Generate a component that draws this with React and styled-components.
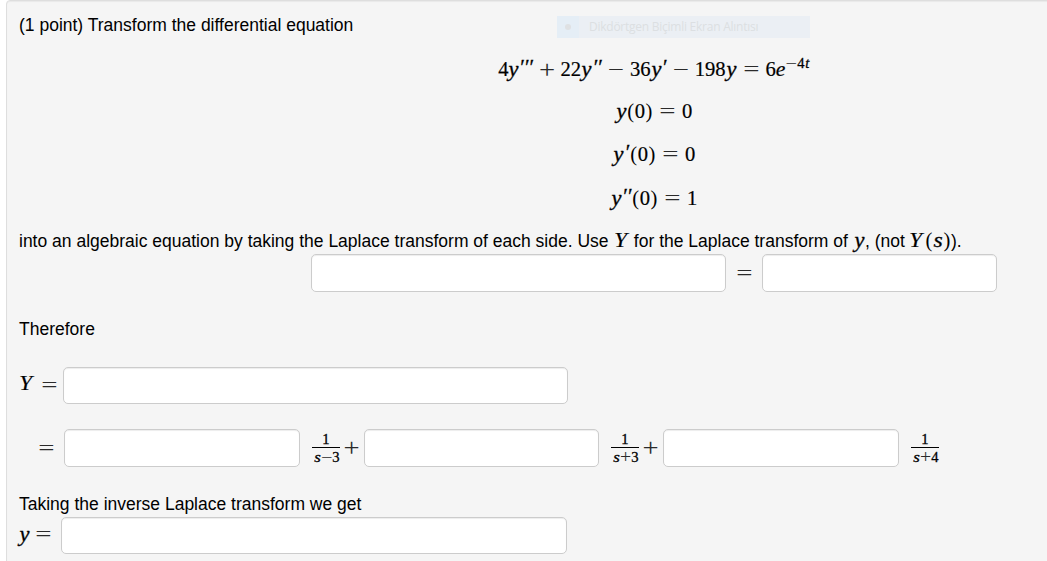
import React from "react";
import styled, { createGlobalStyle } from "styled-components";

const GlobalStyle = createGlobalStyle`
  body {
    margin: 0;
    background: #ffffff;
    overflow: hidden;
  }
`;

const Page = styled.div`
  height: 561px;
  overflow: hidden;
  padding-left: 6px;
  box-sizing: border-box;
  font-family: "Liberation Sans", Arial, sans-serif;
  font-size: 17.5px;
  color: #000000;
`;

const Well = styled.div`
  box-sizing: border-box;
  width: 1296px;
  height: 620px;
  padding: 11px 12px;
  border: 1px solid #dedede;
  border-radius: 4px;
  background: #f5f5f5;
  box-shadow: inset 0 1px 1px rgba(0, 0, 0, 0.05);
`;

const Line = styled.div`
  display: flex;
  align-items: baseline;
  height: 26px;
  line-height: 26px;
  white-space: pre;
  margin-top: ${props => props.top || 0}px;
`;

const Sentence = styled.span`
  display: inline-block;
  width: ${props => props.w}px;
`;

const Display = styled.div`
  display: flex;
  flex-direction: column;
  align-items: center;
  padding-top: 10px;
`;

const Equation = styled.div`
  display: flex;
  align-items: baseline;
  height: ${props => props.h || 43}px;
  line-height: ${props => props.leading || 43}px;
`;

const Glyph = styled.span`
  display: inline-flex;
  justify-content: center;
  width: ${props => props.w}px;
  margin-right: ${props => props.gap || 0}px;
  font-family: "Liberation Serif", "Times New Roman", serif;
  font-size: ${props => props.size || 20.6}px;
  font-style: ${props => (props.italic ? "italic" : "normal")};
  white-space: nowrap;
  color: ${props => props.tint || "#000000"};
  -webkit-text-stroke: ${props => props.weight || 0}px #000000;
  transform: translateY(${props => props.rise || 0}px)
    scaleX(${props => props.stretch || 1});
`;

const AnswerRow = styled.div`
  display: flex;
  align-items: center;
  height: ${props => props.h || 38}px;
  margin-top: ${props => props.top || 0}px;
  padding-left: ${props => props.indent || 0}px;
`;

const Answer = styled.input`
  box-sizing: border-box;
  width: ${props => props.w}px;
  height: 100%;
  margin: 0 ${props => props.after || 0}px 0 ${props => props.before || 0}px;
  padding: 4px 6px;
  border: 1px solid #cccccc;
  border-radius: 5px;
  background: #ffffff;
  box-shadow: inset 0 1px 1px rgba(0, 0, 0, 0.075);
  outline: none;
`;

const Fraction = styled.span`
  display: flex;
  flex-direction: column;
  align-items: center;
  width: 28px;
  margin-right: ${props => props.after || 0}px;
  line-height: 17px;
`;

const Bar = styled.span`
  width: 28px;
  height: 1px;
  background: #000000;
`;

const Denominator = styled.span`
  display: flex;
  align-items: baseline;
  height: 17px;
  padding: 1px 0 0 2px;
`;

const Snip = styled.div`
  position: absolute;
  left: 557px;
  top: 16px;
  display: flex;
  align-items: center;
  width: 253px;
  height: 22px;
  background: #ebeff4;
  color: #dcdfe2;
  font-family: "Open Sans", "Noto Sans", sans-serif;
  font-size: 12px;
  letter-spacing: -0.25px;
  line-height: 20px;
  white-space: nowrap;
`;

const SnipIcon = styled.span`
  display: flex;
  align-items: center;
  justify-content: center;
  width: 22px;
  height: 22px;
  margin-right: 10px;
  background: #e5eef6;
`;

const Dot = styled.span`
  width: 6px;
  height: 6px;
  border-radius: 50%;
  background: #dfe1e3;
`;

const Y = props => (
  <Glyph w={11} size={20} italic weight={0.3} stretch={1.12} {...props}>
    y
  </Glyph>
);

const CapitalY = props => (
  <Glyph w={15} italic weight={0.15} stretch={1.15} {...props}>
    Y
  </Glyph>
);

const Prime = ({ n, ...props }) => (
  <Glyph italic weight={0.3} size={21} rise={-2} {...props}>
    {"′".repeat(n)}
  </Glyph>
);

const Op = ({ sign, ...props }) => (
  <Glyph w={14} stretch={1.4} tint="#2a2a2a" {...props}>
    {sign}
  </Glyph>
);

const Plus = props => (
  <Glyph w={14} size={26} stretch={1.1} rise={2} tint="#2a2a2a" {...props}>
    +
  </Glyph>
);

const Num = ({ value, ...props }) => (
  <Glyph w={String(value).length * 10.3} weight={0.2} {...props}>
    {value}
  </Glyph>
);

const Initial = ({ order, value, h }) => (
  <Equation h={h}>
    <Y />
    {order > 0 && <Prime n={order} w={order === 1 ? 6 : 10} />}
    <Glyph w={8}>(</Glyph>
    <Num value={0} />
    <Glyph w={8} gap={7}>
      )
    </Glyph>
    <Op sign="=" w={15} gap={7} />
    <Num value={value} />
  </Equation>
);

const Term = ({ sign, root, after }) => (
  <Fraction after={after}>
    <Glyph w={8} size={14.6} rise={1} weight={0.3}>
      1
    </Glyph>
    <Bar />
    <Denominator>
      <Glyph
        w={7}
        size={14.6}
        rise={sign === "+" ? -1 : 0}
        italic
        weight={0.3}
        stretch={1.15}
      >
        s
      </Glyph>
      {sign === "+" ? (
        <Plus w={11} size={18} rise={0} />
      ) : (
        <Op sign={sign} w={11} size={14.6} />
      )}
      <Glyph w={8} size={14.6} rise={sign === "+" ? -1 : 0} weight={0.3}>
        {root}
      </Glyph>
    </Denominator>
  </Fraction>
);

export default () => {
  return (
    <React.Fragment>
      <GlobalStyle />
      <Page>
        <Well>
          <Line>(1 point) Transform the differential equation</Line>
          <Display>
            <Equation h={42} leading={39}>
              <Num value={4} />
              <Y />
              <Prime n={3} w={13} gap={8} />
              <Plus gap={6} />
              <Num value={22} />
              <Y />
              <Prime n={2} w={10} gap={7} />
              <Op sign="−" gap={7} />
              <Num value={36} />
              <Y />
              <Prime n={1} w={5} gap={7} />
              <Op sign="−" gap={7} />
              <Num value={198} />
              <Y gap={7} />
              <Op sign="=" w={15} gap={7} />
              <Num value={6} />
              <Glyph w={9} italic weight={0.2} stretch={1.05}>
                e
              </Glyph>
              <Op sign="−" w={12} size={14.6} rise={-8} />
              <Glyph w={8} size={14.6} rise={-8} weight={0.3}>
                4
              </Glyph>
              <Glyph w={5} size={14.6} rise={-8} italic weight={0.3}>
                t
              </Glyph>
            </Equation>
            <Initial order={0} value={0} />
            <Initial order={1} value={0} h={44} />
            <Initial order={2} value={1} h={50} />
          </Display>
          <Line>
            <Sentence w={594}>
              into an algebraic equation by taking the Laplace transform of each
              side. Use{" "}
            </Sentence>
            <CapitalY gap={1} />
            <Sentence w={225}> for the Laplace transform of </Sentence>
            <Y />
            <Sentence w={43}>, (not </Sentence>
            <CapitalY gap={2} />
            <Glyph w={8}>(</Glyph>
            <Glyph w={10} italic weight={0.3} stretch={1.15}>
              s
            </Glyph>
            <Glyph w={8}>)</Glyph>
            <span>).</span>
          </Line>
          <AnswerRow top={1} indent={292}>
            <Answer w={415} after={11} />
            <Op sign="=" w={15} />
            <Answer w={235} before={10} />
          </AnswerRow>
          <Line top={24}>Therefore</Line>
          <AnswerRow h={37} top={25}>
            <CapitalY w={13} gap={10} rise={-2} />
            <Op sign="=" w={15} />
            <Answer w={505} before={6} />
          </AnswerRow>
          <AnswerRow top={25} indent={20}>
            <Op sign="=" w={15} />
            <Answer w={236} before={10} after={12} />
            <Term sign="−" root="3" after={4} />
            <Plus w={15} rise={0} />
            <Answer w={235} before={5} after={12} />
            <Term sign="+" root="3" after={4} />
            <Plus w={15} rise={0} />
            <Answer w={236} before={5} after={12} />
            <Term sign="+" root="4" />
          </AnswerRow>
          <Line top={24}>Taking the inverse Laplace transform we get</Line>
          <AnswerRow h={37}>
            <Y gap={6} rise={-1} />
            <Op sign="=" w={15} rise={-1} />
            <Answer w={506} before={10} />
          </AnswerRow>
        </Well>
        <Snip>
          <SnipIcon>
            <Dot />
          </SnipIcon>
          Dikdörtgen Biçimli Ekran Alıntısı
        </Snip>
      </Page>
    </React.Fragment>
  );
};
